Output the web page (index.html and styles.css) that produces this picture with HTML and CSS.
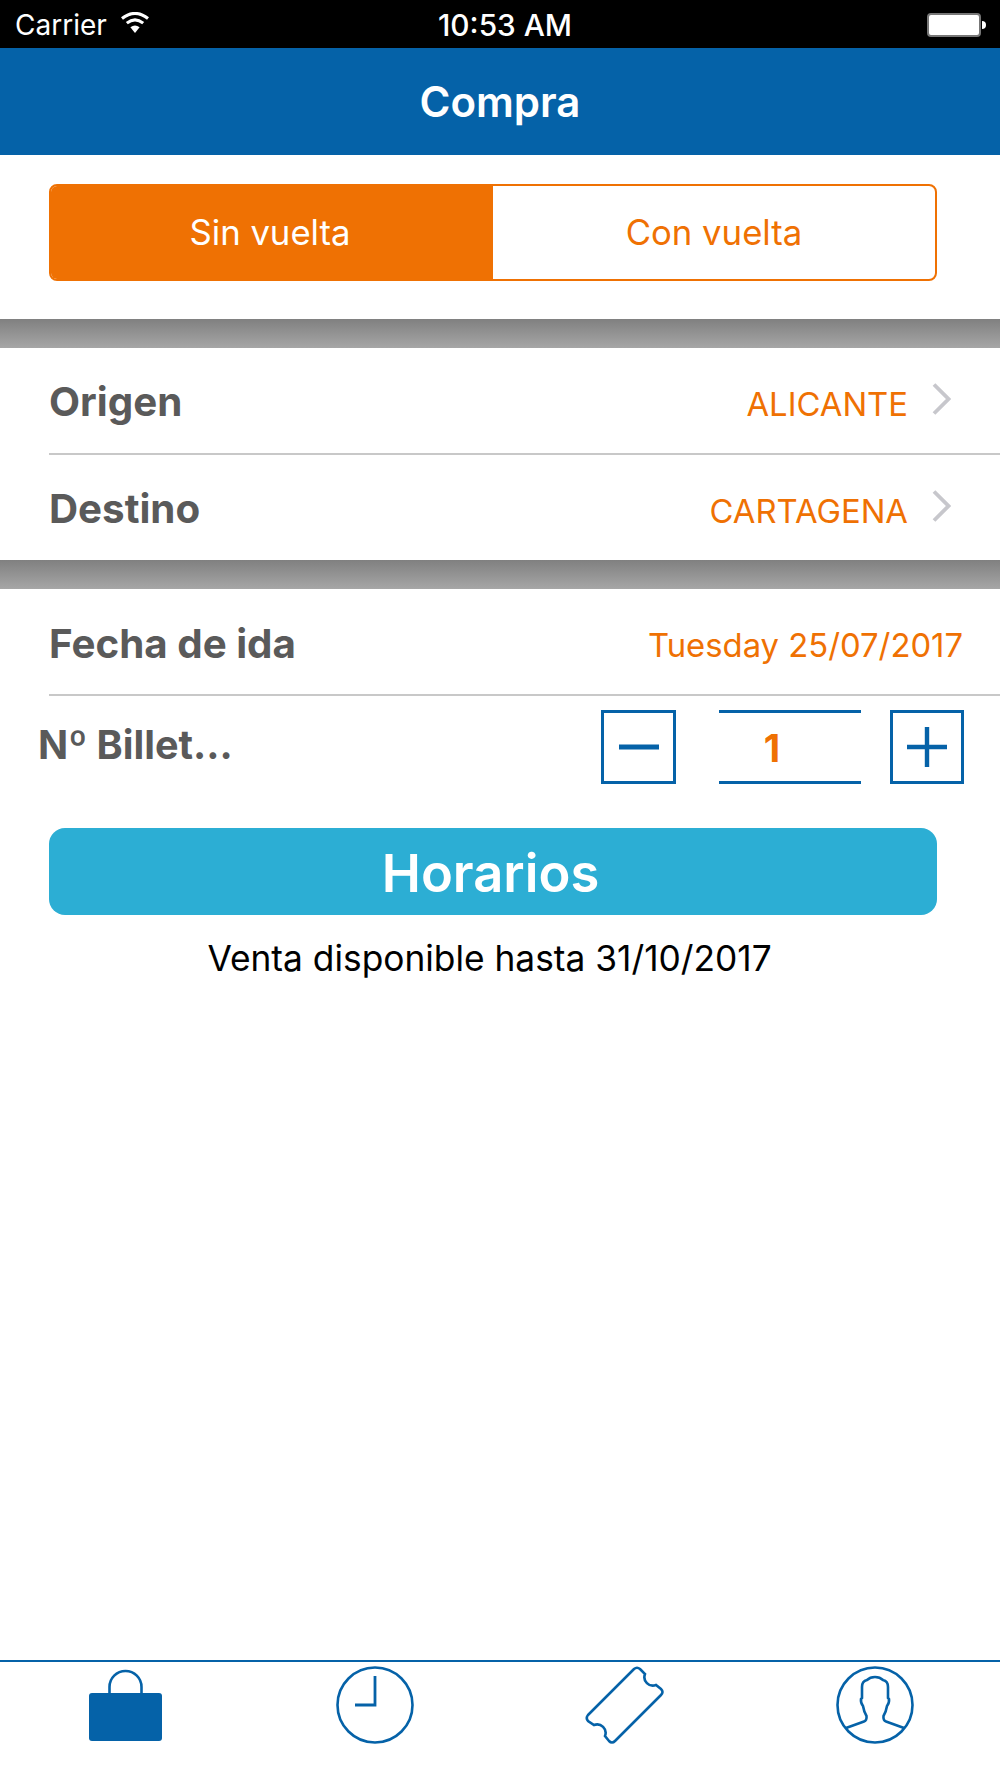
FILE: index.html
```html
<!DOCTYPE html>
<html lang="es">
<head>
    <meta charset="UTF-8">
    <title>Compra</title>
    <link rel="stylesheet" href="styles.css">
</head>
<body>
    <div class="app">
        <div class="status-bar">
            <div class="status-left">
                <span class="carrier">Carrier</span>
                <svg class="wifi" width="30" height="21" viewBox="0 0 28 20">
                    <path d="M14 20L9.6 14.6Q14 11 18.4 14.6Z" fill="#fff"/>
                    <path d="M6.2 10.6Q14 4.4 21.8 10.6" fill="none" stroke="#fff" stroke-width="3"/>
                    <path d="M1.6 6.2Q14 -3.4 26.4 6.2" fill="none" stroke="#fff" stroke-width="3"/>
                </svg>
            </div>
            <div class="clock">10:53 AM</div>
            <div class="battery"><div class="battery-body"></div><div class="battery-tip"></div></div>
        </div>

        <div class="nav-bar">Compra</div>

        <div class="trip-section">
            <div class="segment">
                <div class="segment-item active">Sin vuelta</div>
                <div class="segment-item">Con vuelta</div>
            </div>
        </div>

        <div class="band"></div>

        <div class="list-row">
            <span class="row-label">Origen</span>
            <span class="row-value">ALICANTE</span>
            <svg class="chevron" width="19" height="32" viewBox="0 0 19 32"><path d="M2 1.5L16.5 16L2 30.5" fill="none" stroke="#c7c7cc" stroke-width="3.8"/></svg>
        </div>
        <div class="separator"></div>
        <div class="list-row">
            <span class="row-label">Destino</span>
            <span class="row-value">CARTAGENA</span>
            <svg class="chevron" width="19" height="32" viewBox="0 0 19 32"><path d="M2 1.5L16.5 16L2 30.5" fill="none" stroke="#c7c7cc" stroke-width="3.8"/></svg>
        </div>

        <div class="band"></div>

        <div class="list-row date-row">
            <span class="row-label">Fecha de ida</span>
            <span class="row-value">Tuesday 25/07/2017</span>
        </div>
        <div class="separator"></div>

        <div class="tickets-row">
            <span class="row-label">Nº Billet...</span>
            <div class="stepper">
                <div class="step-btn">
                    <svg width="40" height="40" viewBox="0 0 40 40"><path d="M0 20H40" stroke="#0562a8" stroke-width="5"/></svg>
                </div>
                <div class="step-input">1</div>
                <div class="step-btn">
                    <svg width="40" height="40" viewBox="0 0 40 40"><path d="M0 20H40M20 0V40" stroke="#0562a8" stroke-width="4.4"/></svg>
                </div>
            </div>
        </div>

        <div class="schedule-btn">Horarios</div>
        <div class="sale-note">Venta disponible hasta 31/10/2017</div>

        <div class="tab-bar">
            <div class="tab">
                <svg width="80" height="80" viewBox="0 0 80 80">
                    <path d="M24.5 29V22a16 16 0 0 1 32 0V29" fill="none" stroke="#0562a8" stroke-width="2.6"/>
                    <rect x="4" y="28" width="73" height="48" rx="3" fill="#0562a8"/>
                </svg>
            </div>
            <div class="tab">
                <svg width="80" height="80" viewBox="0 0 80 80">
                    <circle cx="40" cy="40" r="37.5" fill="none" stroke="#0562a8" stroke-width="2.6"/>
                    <path d="M40 11V40H20" fill="none" stroke="#0562a8" stroke-width="2.8"/>
                </svg>
            </div>
            <div class="tab">
                <svg width="80" height="80" viewBox="0 0 80 80">
                    <path d="M3 50L49 4Q52 1.5 55 4L60 9A8.5 8.5 0 0 0 71 20L76 24Q79 27 76 30L30 76Q27 79 24 76L20 71A8.5 8.5 0 0 0 9 60L3 56Q0.5 53 3 50Z" fill="none" stroke="#0562a8" stroke-width="2.6"/>
                </svg>
            </div>
            <div class="tab">
                <svg width="80" height="80" viewBox="0 0 80 80">
                    <circle cx="40" cy="40" r="37.5" fill="none" stroke="#0562a8" stroke-width="2.6"/>
                    <path d="M11 63L29 56.5Q32 55.5 31.5 51Q29 47 28 41Q25.5 38 26 34L27 33V22Q27 16 32 15Q35 12 40 12Q45 12 48 15Q53 16 53 22V33L54 34Q54.5 38 52 41Q51 47 48.5 51Q48 55.5 51 56.5L69 63" fill="none" stroke="#0562a8" stroke-width="2.6"/>
                </svg>
            </div>
        </div>
    </div>
</body>
</html>
```

FILE: styles.css
```css
:root {
    --blue: #0562a8;
    --orange: #ef7103;
    --sky: #2caed4;
    --label: #5a5a5a;
    --line: #c8c8c8;
}

* {
    box-sizing: border-box;
    margin: 0;
    padding: 0;
}

body {
    font-family: Inter, "Liberation Sans", sans-serif;
    background-color: #fff;
}

.app {
    display: flex;
    flex-direction: column;
    width: 1000px;
    height: 1778px;
}

/* status bar */
.status-bar {
    display: grid;
    grid-template-columns: 1fr auto 1fr;
    align-items: center;
    height: 48px;
    padding-top: 2px;
    background-color: #000;
    color: #fff;
}

.status-left {
    display: flex;
    align-items: center;
    gap: 13px;
    padding-left: 15px;
}

.carrier {
    font-size: 28px;
}

.wifi {
    margin-top: -6px;
}

.clock {
    padding-left: 10px;
    font-size: 29.8px;
    font-weight: 500;
}

.battery {
    display: flex;
    align-items: center;
    justify-content: flex-end;
    padding-right: 14px;
}

.battery-body {
    width: 54px;
    height: 24px;
    background-color: #fff;
    border: 2px solid #777;
    border-radius: 4px;
}

.battery-tip {
    width: 4px;
    height: 8px;
    margin-left: 1px;
    background-color: #fff;
    border-radius: 0 4px 4px 0;
}

/* nav */
.nav-bar {
    display: flex;
    align-items: center;
    justify-content: center;
    height: 107px;
    background-color: var(--blue);
    color: #fff;
    font-size: 42px;
    font-weight: 600;
}

.trip-section {
    height: 164px;
    padding: 29px 63px 0 49px;
}

.segment {
    display: flex;
    height: 97px;
    border: 2px solid var(--orange);
    border-radius: 8px;
    overflow: hidden;
}

.segment-item {
    display: flex;
    flex: 0 0 50%;
    align-items: center;
    justify-content: center;
    padding-bottom: 2px;
    color: var(--orange);
    font-size: 34.7px;
}

.segment-item.active {
    padding-right: 4px;
    background-color: var(--orange);
    color: #fff;
}

.band {
    flex: none;
    height: 29px;
    background: linear-gradient(#808080, #a6a6a6);
}

/* rows */
.list-row {
    display: flex;
    align-items: center;
    height: 105px;
    padding: 0 49px;
}

.row-label {
    flex: 1;
    padding-top: 2px;
    color: var(--label);
    font-size: 40.3px;
    font-weight: 700;
}

.row-value {
    padding-top: 6px;
    color: var(--orange);
    font-size: 32.8px;
}

.chevron {
    margin: -3px 0 0 24px;
}

.date-row {
    padding-right: 37px;
}

.date-row .row-label {
    padding-top: 4px;
}

.separator {
    flex: none;
    height: 2px;
    margin-left: 49px;
    background-color: var(--line);
}

.tickets-row {
    display: flex;
    align-items: center;
    padding: 14px 36px 0 38px;
}

.tickets-row .row-label {
    flex: none;
    padding-top: 0;
    margin-bottom: 4px;
    font-size: 39.6px;
}

.stepper {
    display: flex;
    align-items: center;
    margin-left: auto;
}

.step-btn {
    display: flex;
    align-items: center;
    justify-content: center;
    width: 75px;
    height: 74px;
    border: 3px solid var(--blue);
}

.step-btn:last-child {
    width: 74px;
}

.step-input {
    width: 142px;
    height: 74px;
    margin: 0 29px 0 43px;
    padding-right: 36px;
    border-top: 3px solid var(--blue);
    border-bottom: 3px solid var(--blue);
    color: var(--orange);
    font-size: 38px;
    font-weight: 700;
    line-height: 70px;
    text-align: center;
}

.schedule-btn {
    margin: 44px 63px 0 49px;
    height: 87px;
    padding-right: 5px;
    background-color: var(--sky);
    border-radius: 16px;
    color: #fff;
    font-size: 52.5px;
    font-weight: 600;
    line-height: 91px;
    text-align: center;
}

.sale-note {
    margin: 22px 70px 0 49px;
    color: #000;
    font-size: 35.3px;
    text-align: center;
}

/* tab bar */
.tab-bar {
    display: grid;
    grid-template-columns: repeat(4, 1fr);
    height: 118px;
    margin-top: auto;
    padding-top: 3px;
    border-top: 2px solid var(--blue);
}

.tab {
    display: flex;
    justify-content: center;
}
```
